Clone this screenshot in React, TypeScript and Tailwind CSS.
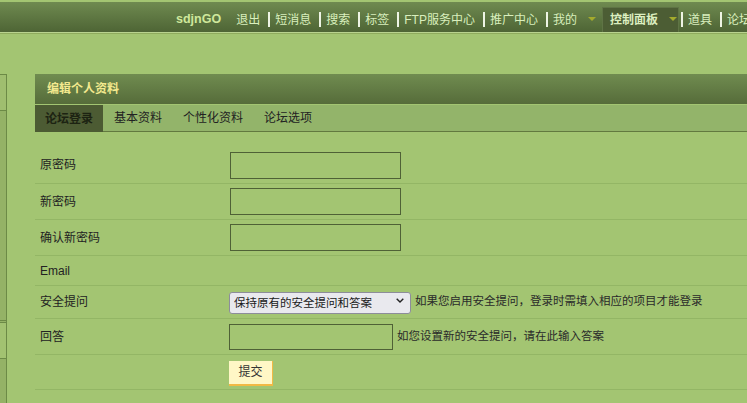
import React from "react";

const Sep = ({ ml = "ml-[8px]" }: { ml?: string }) => (
  <span className={`block shrink-0 self-center w-[2px] h-[15px] bg-[#eef4e4] mr-[5px] ${ml}`} />
);

const Tri = () => (
  <span className="block shrink-0 self-center ml-[11px] mt-[-2px] w-0 h-0 border-l-[4px] border-r-[4px] border-t-[4px] border-l-transparent border-r-transparent border-t-[#a4ab2c]" />
);

function Row({ h, label, children }: { h: string; label?: string; children?: React.ReactNode }) {
  return (
    <div className={`flex items-center border-b border-[#93b665] ${h}`}>
      <div className="w-[195px] pl-[5px] text-[12px] text-[#222]">{label}</div>
      <div className="flex items-center">{children}</div>
    </div>
  );
}

export default function App() {
  const items = ["退出", "短消息", "搜索", "标签", "FTP服务中心", "推广中心"];
  return (
    <div className="w-[747px] h-[403px] overflow-hidden bg-[#a3c572] font-['Liberation_Sans','Noto_Sans_CJK_SC',sans-serif]">
      {/* top bar */}
      <div className="h-[2px] bg-[#a3c572]" />
      <div className="h-[30px] bg-linear-to-b from-[#6f8a50] to-[#4e6535] flex items-stretch pt-[5px] pl-[176px] whitespace-nowrap text-[12px] text-[#d9efbd] overflow-hidden">
        <span className="shrink-0 flex items-center font-bold text-[12.5px] text-[#cfe89c] mr-[15px]">sdjnGO</span>
        {items.map((t) => (
          <React.Fragment key={t}>
            <span className="shrink-0 flex items-center">{t}</span>
            <Sep />
          </React.Fragment>
        ))}
        <span className="shrink-0 flex items-center">我的</span>
        <Tri />
        <span className="shrink-0 flex items-center ml-[6px] w-[77px] pl-[7px] bg-[#4c5d34] border border-b-0 border-[#5f7445]">
          <span className="font-bold text-[#dcefc0]">控制面板</span>
          <Tri />
        </span>
        <Sep ml="ml-[2px]" />
        <span className="shrink-0 flex items-center">道具</span>
        <Sep />
        <span className="shrink-0 flex items-center">论坛</span>
      </div>
      <div className="h-[1px] bg-[#b9d38f]" />
      <div className="h-[1px] bg-[#8eab5d]" />

      {/* body */}
      <div className="flex mt-[40px] h-[329px]">
        {/* left sidebar */}
        <div className="w-[7px] shrink-0 flex flex-col border-r border-[#6c8a46]">
          <div className="h-[36px] bg-[#9fbe6f] border-t border-[#6c8a46]" />
          <div className="h-[210px] bg-[#94b266] border-t border-[#6c8a46]" />
          <div className="h-[2px] bg-[#94b266] border-t border-[#6c8a46]" />
          <div className="h-[37px] bg-[#a2c271] border-t border-b border-[#6c8a46]" />
          <div className="flex-1 bg-[#94b266]" />
        </div>

        {/* main panel */}
        <div className="ml-[28px] flex-1 flex flex-col">
          <div className="h-[30px] bg-linear-to-b from-[#708c50] to-[#566c3a] flex items-center pl-[12px] text-[12px] font-bold text-[#f3e98e]">
            编辑个人资料
          </div>
          <div className="h-[1px] bg-[#a3c572]" />
          <div className="h-[27px] flex bg-[#93b46a] text-[12px] text-[#222]">
            <div className="w-[68px] flex items-center justify-center bg-[#4c5b33] text-[#1c2312] font-bold">论坛登录</div>
            <div className="flex-1 flex border-b border-[#62793f]">
              <span className="flex items-center px-[10px] ml-[1px]">基本资料</span>
              <span className="flex items-center px-[10px] ml-[1px]">个性化资料</span>
              <span className="flex items-center px-[10px] ml-[1px]">论坛选项</span>
            </div>
          </div>

          <div className="pt-[15px]">
            <Row h="h-[37px]" label="原密码">
              <input className="w-[171px] h-[27px] border border-[#4f6136] bg-transparent" />
            </Row>
            <Row h="h-[36px]" label="新密码">
              <input className="w-[171px] h-[27px] border border-[#4f6136] bg-transparent" />
            </Row>
            <Row h="h-[36px]" label="确认新密码">
              <input className="w-[171px] h-[27px] border border-[#4f6136] bg-transparent" />
            </Row>
            <Row h="h-[30px]" label="Email" />
            <Row h="h-[33px]" label="安全提问">
              <div className="relative ml-[-1px]">
                <select className="appearance-none w-[182px] h-[22px] rounded-[3px] border border-[#8d8d9a] bg-[#e9e9ee] pl-[4px] text-[11.5px] text-[#1a1a1a]">
                  <option>保持原有的安全提问和答案</option>
                </select>
                <svg className="absolute right-[7px] top-[8px] pointer-events-none" width="8" height="5" viewBox="0 0 8 5">
                  <path d="M0.7 0.7 L4 4 L7.3 0.7" fill="none" stroke="#222" strokeWidth="1.4" />
                </svg>
              </div>
              <span className="ml-[4px] text-[11.5px] text-[#2a2a2a] whitespace-nowrap">如果您启用安全提问，登录时需填入相应的项目才能登录</span>
            </Row>
            <Row h="h-[36px]" label="回答">
              <input className="ml-[-1px] w-[164px] h-[26px] border border-[#4f6136] bg-transparent" />
              <span className="ml-[4px] text-[11.5px] text-[#2a2a2a] whitespace-nowrap">如您设置新的安全提问，请在此输入答案</span>
            </Row>
            <Row h="h-[35px]">
              <button className="ml-[-1px] mt-[2px] w-[44px] h-[25px] bg-[#fff7c6] border-b-2 border-r border-[#f2b944] text-[12px] text-[#333]">
                提交
              </button>
            </Row>
          </div>
        </div>
      </div>
    </div>
  );
}
